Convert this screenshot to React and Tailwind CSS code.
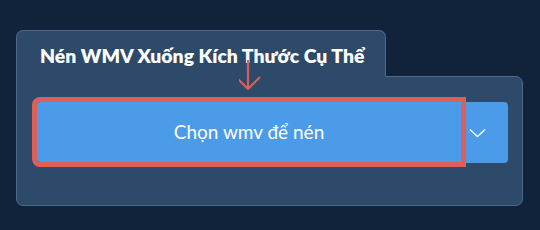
export default function App() {
  return (
    <div className="w-[540px] h-[230px] bg-[#11233a] pt-[30px] pl-4" style={{ fontFamily: 'Lato, "Noto Sans", sans-serif' }}>
      <div className="relative w-[507px]">
        <div className="relative z-10 w-[370px] h-[47px] -mb-px bg-[#2d4a6a] border border-b-0 border-[#4c6788] rounded-t-[7px] pl-[23px] pt-[15px]">
          <span className="block text-white font-extrabold text-[19.4px] leading-none">Nén WMV Xuống Kích Thước Cụ Thể</span>
        </div>
        <div className="h-[130px] bg-[#2d4a6a] border border-[#4c6788] rounded-b-[7px] rounded-tr-[7px] pl-5 pt-[25px]">
          <div className="flex">
            <button className="w-[424px] h-[60px] bg-[#4c9be8] text-white text-[19px] rounded-l-[3px] outline-[5px] outline-solid outline-[#dc5f5a] relative z-10">
              Chọn wmv để nén
            </button>
            <button className="w-[47px] h-[61px] bg-[#4c9be8] rounded-r-[4px] flex items-center justify-center pr-[14px]">
              <svg width="17" height="10" viewBox="0 0 17 10" fill="none">
                <polyline points="1,1.5 8.5,8.5 16,1.5" stroke="white" strokeWidth="1.4" />
              </svg>
            </button>
          </div>
        </div>
        <svg className="absolute left-[223px] top-[29px] z-20" width="26" height="32" viewBox="0 0 26 32" fill="none">
          <line x1="9" y1="1" x2="9" y2="30" stroke="#dc5f5a" strokeWidth="2.2" />
          <polyline points="-3,18 9,30 21,18" stroke="#dc5f5a" strokeWidth="2.2" />
        </svg>
      </div>
    </div>
  );
}
